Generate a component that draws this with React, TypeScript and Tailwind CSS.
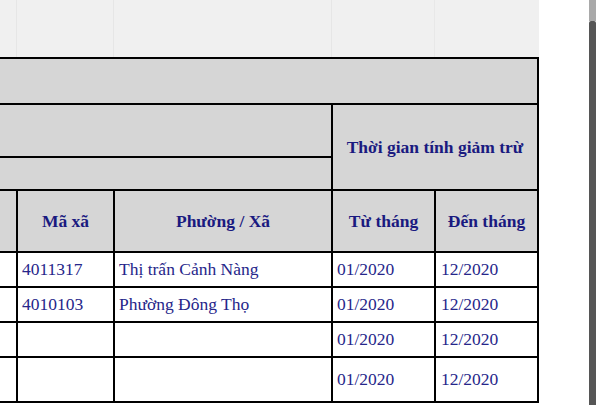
const rows = [
  { code: "4011317", name: "Thị trấn Cảnh Nàng", from: "01/2020", to: "12/2020" },
  { code: "4010103", name: "Phường Đông Thọ", from: "01/2020", to: "12/2020" },
  { code: "", name: "", from: "01/2020", to: "12/2020" },
  { code: "", name: "", from: "01/2020", to: "12/2020" },
];

const cols = "grid-cols-[16px_95px_216px_101px_101px]";

const App = () => {
  return (
    <div
      className="relative h-[405px] w-[602px] overflow-hidden bg-white"
      style={{ fontFamily: '"Liberation Serif", "Times New Roman", serif' }}
    >
      <div className="w-[539px]">
        {/* sheet background above the table, faint gridlines */}
        <div className="grid h-[57px] grid-cols-[17px_97px_218px_103px_104px] bg-[#f0f0f0]">
          <div className="border-r border-[#e6e6e6]" />
          <div className="border-r border-[#e6e6e6]" />
          <div className="border-r border-[#e6e6e6]" />
          <div className="border-r border-[#e8e8e8]" />
          <div />
        </div>

        <div
          className={`grid ${cols} grid-rows-[44px_51px_31px_60px_33px_33px_33px_43px] gap-[2px] bg-black pt-[2px] pr-[2px] pb-[2px] text-[17.5px]`}
        >
          <div className="col-span-5 bg-[#d6d6d6]" />

          <div className="col-span-3 bg-[#d6d6d6]" />
          <div className="col-span-2 row-span-2 flex items-center justify-center bg-[#d6d6d6] font-bold text-[#1a1a80]">
            Thời gian tính giảm trừ
          </div>
          <div className="col-span-3 bg-[#d6d6d6]" />

          <div className="bg-[#d6d6d6]" />
          <div className="flex items-center justify-center bg-[#d6d6d6] font-bold text-[#1a1a80]">Mã xã</div>
          <div className="flex items-center justify-center bg-[#d6d6d6] font-bold text-[#1a1a80]">Phường / Xã</div>
          <div className="flex items-center justify-center bg-[#d6d6d6] font-bold text-[#1a1a80]">Từ tháng</div>
          <div className="flex items-center justify-center bg-[#d6d6d6] font-bold text-[#1a1a80]">Đến tháng</div>

          {rows.map((r, i) => (
            <div key={i} className="contents">
              <div className="bg-white" />
              <div className="flex items-center bg-white pl-1 text-[#26268a]">{r.code}</div>
              <div className="flex items-center bg-white pl-1 text-[#26268a]">{r.name}</div>
              <div className="flex items-center bg-white pl-1 text-[#26268a]">{r.from}</div>
              <div className="flex items-center bg-white pl-[5px] text-[#26268a]">{r.to}</div>
            </div>
          ))}
        </div>
      </div>

      {/* overlay scrollbar */}
      <div className="absolute top-0 left-[589px] flex h-full w-[7px] flex-col">
        <div className="h-[21px] bg-[#a9a9a9]" />
        <div className="flex-1 rounded-t-[2px] bg-[#565656]" />
      </div>
    </div>
  );
};

export default App;
